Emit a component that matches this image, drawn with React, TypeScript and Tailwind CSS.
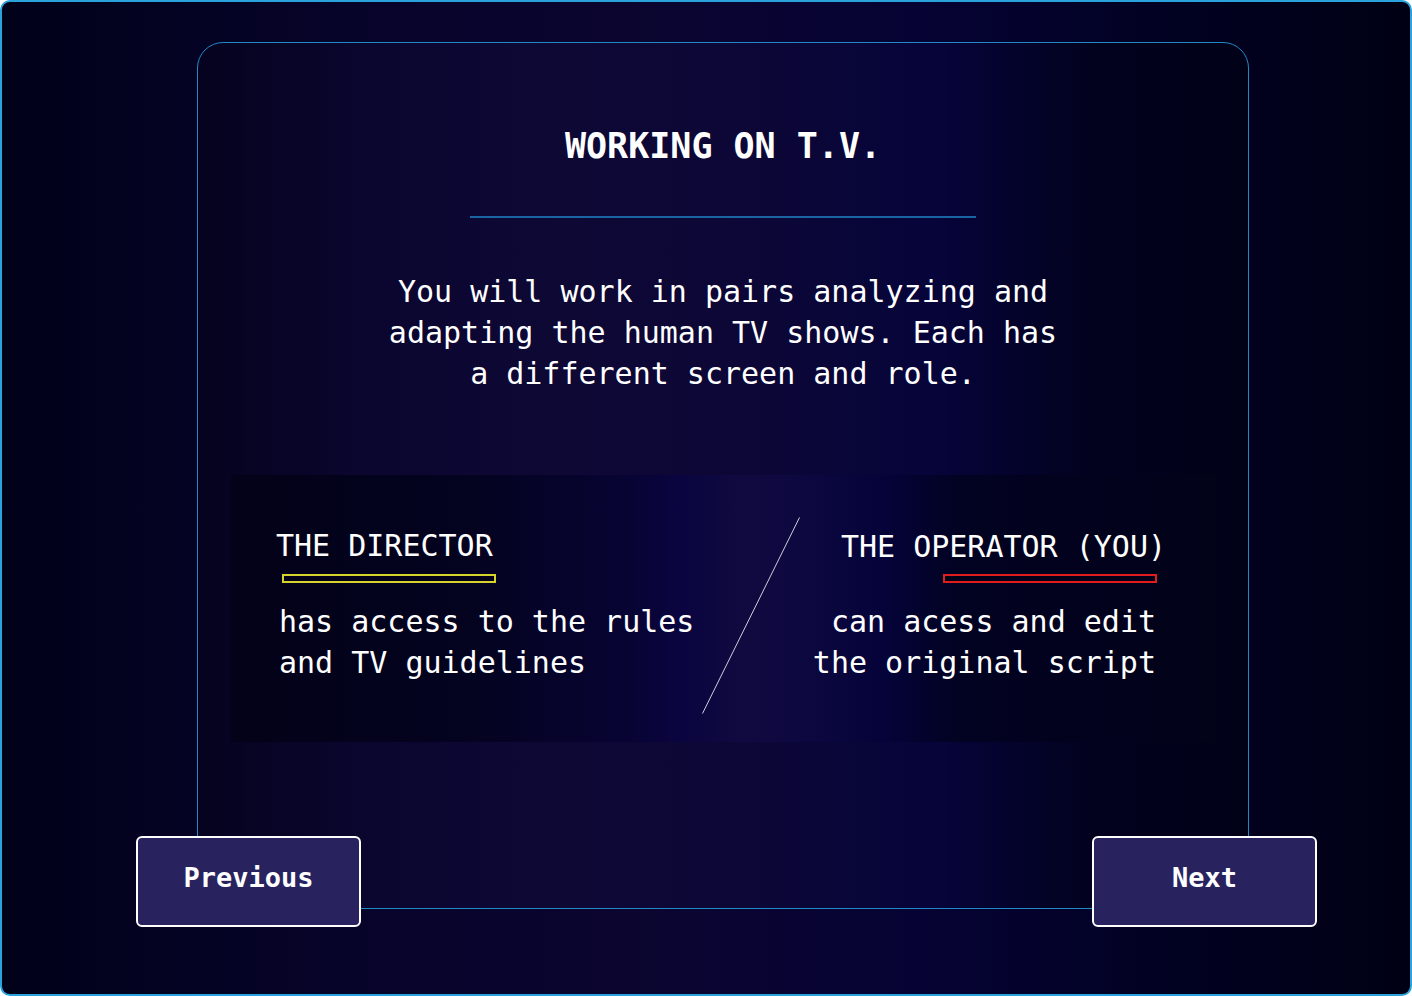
import React from "react";

const mono = "font-['DejaVu_Sans_Mono','Liberation_Mono',monospace]";

const RoleBar = ({ color, className }: { color: string; className?: string }) => (
  <div className={`h-[9px] w-[214px] border-2 bg-[#03021a] ${color} ${className ?? ""}`} />
);

function RolesPanel() {
  return (
    <div className="mt-[81px] flex h-[267px] w-[984px] bg-[linear-gradient(90deg,#030218_0%,#040320_25%,#070433_40%,#0a0540_46%,#100a40_52%,#0d0840_58%,#05033a_66%,#020222_74%,#020219_100%)]">
      {/* director side */}
      <div className="flex w-[471px] flex-col items-start pl-[45px] pt-[53px]">
        <div className="whitespace-nowrap text-[30px] leading-[36px]">THE DIRECTOR</div>
        <RoleBar color="border-[#d6d42a]" className="ml-[6px] mt-[10px]" />
        <p className="ml-[3px] mt-[18px] text-[30px] leading-[41px]">has access to the rules and TV guidelines</p>
      </div>

      <svg className="mt-[42px] shrink-0" width="98" height="197" viewBox="0 0 98 197">
        <line x1="97.5" y1="0.5" x2="0.5" y2="196.5" stroke="#cfcfdc" strokeWidth="1" />
      </svg>

      {/* operator side */}
      <div className="flex w-[415px] flex-col items-end pr-[59px] pt-[54px] text-right">
        <div className="-mr-[10px] whitespace-nowrap text-[30px] leading-[36px]">THE OPERATOR (YOU)</div>
        <RoleBar color="border-[#e01c1c]" className="-mr-[1px] mt-[9px]" />
        <p className="mt-[18px] text-[30px] leading-[41px]">can acess and edit the original script</p>
      </div>
    </div>
  );
}

const NavButton = ({ label }: { label: string }) => (
  <button className="flex h-[91px] w-[225px] items-center justify-center rounded-[6px] border-2 border-white bg-[#28235f] pb-[6px] text-[27px] font-bold text-white">
    {label}
  </button>
);

export default function App() {
  return (
    <div
      className={`h-[996px] w-[1412px] overflow-hidden rounded-[10px] border-2 border-[#2aa3dc] bg-[linear-gradient(90deg,#01011a_0%,#07042a_25%,#0b0530_45%,#060334_65%,#010120_85%,#000014_100%)] text-white ${mono}`}
    >
      <div className="ml-[195px] mt-[40px] flex h-[867px] w-[1052px] flex-col items-center rounded-[26px] border border-[#2288c8] bg-[linear-gradient(90deg,#05031f_0%,#0b0630_18%,#0e0835_35%,#0c0736_52%,#06043a_70%,#02021f_85%,#010118_100%)]">
        <h1 className="mt-[82px] text-[35px] font-bold leading-[42px]">WORKING ON T.V.</h1>
        <div className="mt-[49px] h-[2px] w-[506px] bg-[#1b64a3]" />
        <p className="mt-[53px] w-[680px] text-center text-[30px] leading-[41px]">
          You will work in pairs analyzing and adapting the human TV shows. Each has a different screen and role.
        </p>
        <RolesPanel />
      </div>

      <div className="relative -mt-[73px] ml-[134px] flex w-[1181px] justify-between">
        <NavButton label="Previous" />
        <NavButton label="Next" />
      </div>
    </div>
  );
}
